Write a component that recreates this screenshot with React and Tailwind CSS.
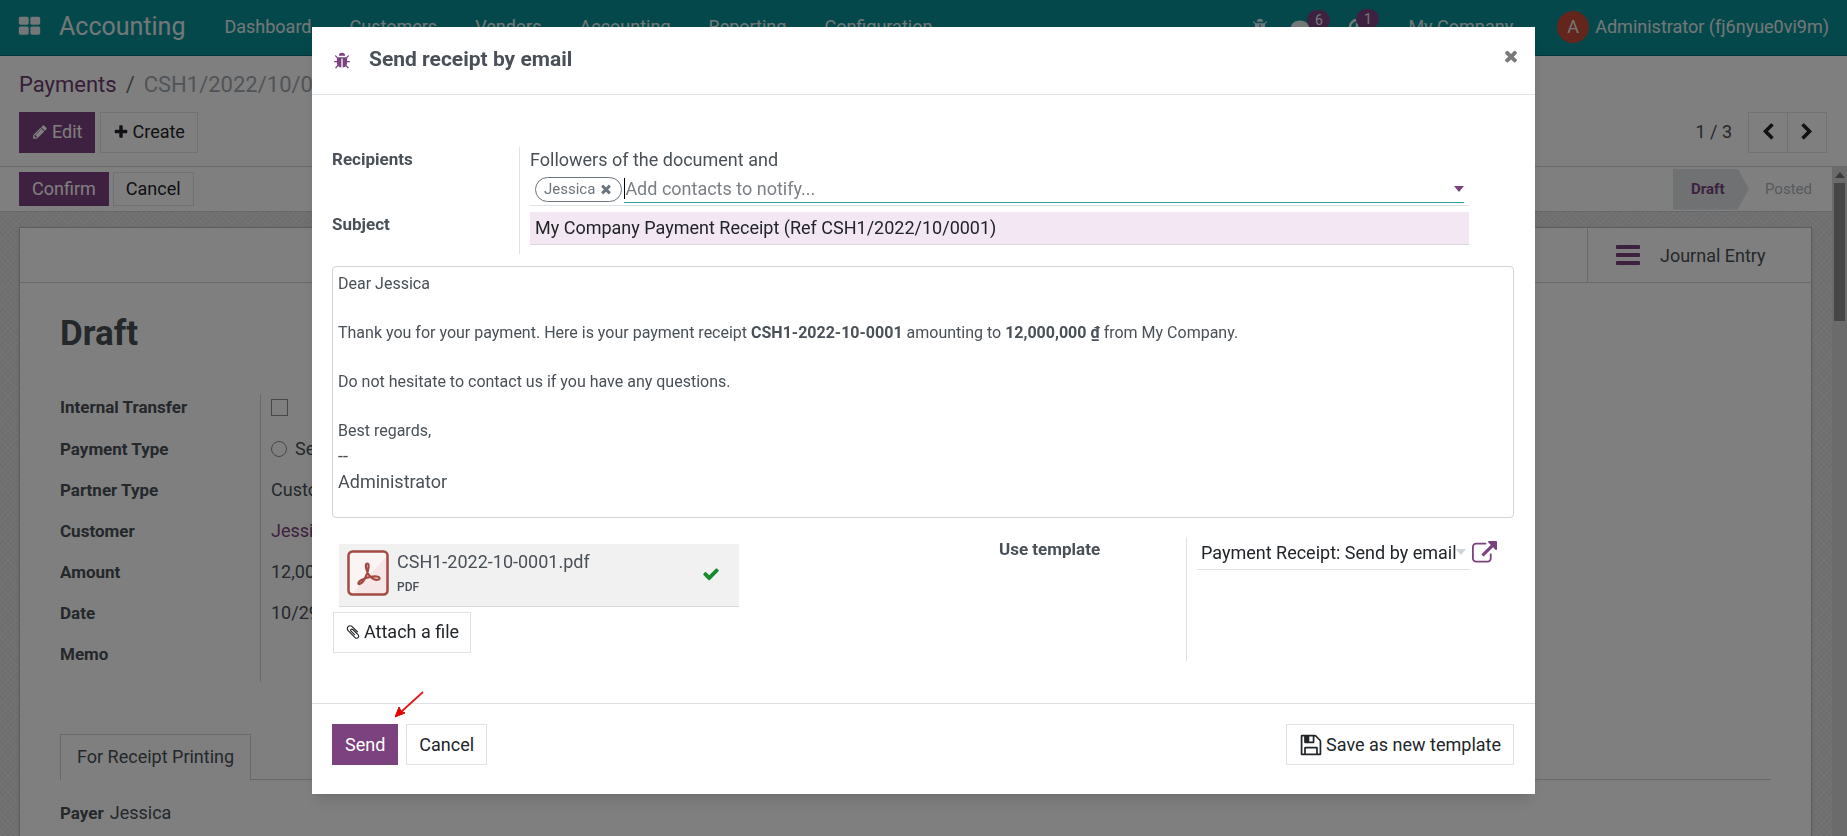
import React, { useState } from 'react';

/* ── Icons ───────────────────────────────────────────────────────────── */
const ICONS = {
  apps: 'M832 1024v384q0 52-38 90t-90 38h-512q-52 0-90-38t-38-90v-384q0-52 38-90t90-38h512q52 0 90 38t38 90zm0-768v384q0 52-38 90t-90 38h-512q-52 0-90-38t-38-90v-384q0-52 38-90t90-38h512q52 0 90 38t38 90zm896 768v384q0 52-38 90t-90 38h-512q-52 0-90-38t-38-90v-384q0-52 38-90t90-38h512q52 0 90 38t38 90zm0-768v384q0 52-38 90t-90 38h-512q-52 0-90-38t-38-90v-384q0-52 38-90t90-38h512q52 0 90 38t38 90z',
  times: 'M1490 1322q0 40-28 68l-136 136q-28 28-68 28t-68-28l-294-294-294 294q-28 28-68 28t-68-28l-136-136q-28-28-28-68t28-68l294-294-294-294q-28-28-28-68t28-68l136-136q28-28 68-28t68 28l294 294 294-294q28-28 68-28t68 28l136 136q28 28 28 68t-28 68l-294 294 294 294q28 28 28 68z',
  check: 'M1671 566q0 40-28 68l-724 724-136 136q-28 28-68 28t-68-28l-136-136-362-362q-28-28-28-68t28-68l136-136q28-28 68-28t68 28l294 295 656-657q28-28 68-28t68 28l136 136q28 28 28 68z',
  plus: 'M1600 736v192q0 40-28 68t-68 28h-416v416q0 40-28 68t-68 28h-192q-40 0-68-28t-28-68v-416h-416q-40 0-68-28t-28-68v-192q0-40 28-68t68-28h416v-416q0-40 28-68t68-28h192q40 0 68 28t28 68v416h416q40 0 68 28t28 68z',
  pencil: 'M491 1536l91-91-235-235-91 91v107h128v128h107zm523-928q0-22-22-22-10 0-17 7l-542 542q-7 7-7 17 0 22 22 22 10 0 17-7l542-542q7-7 7-17zm-54-192l416 416-832 832h-416v-416zm683 96q0 53-37 90l-166 166-416-416 166-165q36-38 90-38 53 0 91 38l235 234q37 39 37 91z',
  left: 'M1427 301l-531 531 531 531q19 19 19 45t-19 45l-166 166q-19 19-45 19t-45-19l-742-742q-19-19-19-45t19-45l742-742q19-19 45-19t45 19l166 166q19 19 19 45t-19 45z',
  right: 'M1363 877l-742 742q-19 19-45 19t-45-19l-166-166q-19-19-19-45t19-45l531-531-531-531q-19-19-19-45t19-45l166-166q19-19 45-19t45 19l742 742q19 19 19 45t-19 45z',
  bug: 'M1696 960q0 26-19 45t-45 19h-224q0 171-67 290l208 209q19 19 19 45t-19 45q-18 19-45 19t-45-19l-198-197q-5 5-15 13t-42 28.5-65 36.5-82 29-97 13v-896h-128v896q-51 0-101.5-13.5t-87-33-66-39-43.5-32.5l-15-14-183 207q-20 21-48 21-24 0-43-16-19-18-20.5-44.5t15.5-46.5l202-227q-58-114-58-274h-224q-26 0-45-19t-19-45 19-45 45-19h224v-294l-173-173q-19-19-19-45t19-45 45-19 45 19l173 173h844l173-173q19-19 45-19t45 19 19 45-19 45l-173 173v294h224q26 0 45 19t19 45zm-480-576h-640q0-133 93.5-226.5t226.5-93.5 226.5 93.5 93.5 226.5z',
  bars: 'M1664 1344v128q0 26-19 45t-45 19h-1408q-26 0-45-19t-19-45v-128q0-26 19-45t45-19h1408q26 0 45 19t19 45zm0-512v128q0 26-19 45t-45 19h-1408q-26 0-45-19t-19-45v-128q0-26 19-45t45-19h1408q26 0 45 19t19 45zm0-512v128q0 26-19 45t-45 19h-1408q-26 0-45-19t-19-45v-128q0-26 19-45t45-19h1408q26 0 45 19t19 45z',
  external: 'M1408 928v320q0 119-84.5 203.5t-203.5 84.5h-832q-119 0-203.5-84.5t-84.5-203.5v-832q0-119 84.5-203.5t203.5-84.5h704q14 0 23 9t9 23v64q0 14-9 23t-23 9h-704q-66 0-113 47t-47 113v832q0 66 47 113t113 47h832q66 0 113-47t47-113v-320q0-14 9-23t23-9h64q14 0 23 9t9 23zm384-864v512q0 26-19 45t-45 19-45-19l-176-176-652 652q-10 10-23 10t-23-10l-114-114q-10-10-10-23t10-23l652-652-176-176q-19-19-19-45t19-45 45-19h512q26 0 45 19t19 45z',
  floppy: 'M512 1536h768v-384h-768v384zm896 0h128v-896q0-14-10-38.5t-20-34.5l-281-281q-10-10-34-20t-39-10v416q0 40-28 68t-68 28h-576q-40 0-68-28t-28-68v-416h-128v1280h128v-416q0-40 28-68t68-28h832q40 0 68 28t28 68v416zm-384-928v-320q0-13-9.5-22.5t-22.5-9.5h-192q-13 0-22.5 9.5t-9.5 22.5v320q0 13 9.5 22.5t22.5 9.5h192q13 0 22.5-9.5t9.5-22.5zm640 32v928q0 40-28 68t-68 28h-1344q-40 0-68-28t-28-68v-1344q0-40 28-68t68-28h928q40 0 88 20t76 48l280 280q28 28 48 76t20 88z',
  clip: 'M1596 1385q0 117-79 196t-196 79q-135 0-235-100l-777-776q-113-115-113-271 0-159 110-270t269-111q158 0 273 113l605 606q10 10 10 22 0 16-30.5 46.5t-46.5 30.5q-13 0-23-10l-606-607q-79-77-181-77-106 0-179 75t-73 181q0 105 76 181l776 777q63 63 145 63 64 0 106-42t42-106q0-82-63-145l-581-581q-26-24-60-24-29 0-48 19t-19 48q0 32 25 59l410 410q10 10 10 22 0 16-31 47t-47 31q-12 0-22-10l-410-410q-63-61-63-149 0-82 57-139t139-57q88 0 149 63l581 581q100 98 100 235z',
  comment: 'M1792 896q0 174-120 321.5t-326 233-450 85.5q-70 0-145-8-198 175-460 242-49 14-114 22-17 2-30.5-9t-17.5-29v-1q-3-4-.5-12t2-10 4.5-9.5l6-9 7-8.5 8-9q7-8 31-34.5t34.5-38 31-39.5 32.5-51 27-59 26-76q-157-89-247.5-220t-90.5-281q0-130 71-248.5t191-204.5 286-136.5 348-50.5q244 0 450 85.5t326 233 120 321.5z',
};

const Icon = ({ name, className = 'size-[18px]' }) => (
  <svg viewBox="0 0 1792 1792" fill="currentColor" aria-hidden="true" className={`shrink-0 ${className}`}>
    <path d={ICONS[name]} />
  </svg>
);

const Caret = ({ className }) => (
  <svg viewBox="0 0 10 6" fill="currentColor" aria-hidden="true" className={`w-[10px] h-[6px] shrink-0 ${className}`}>
    <path d="M0 0h10L5 6z" />
  </svg>
);

const PdfIcon = () => (
  <svg viewBox="0 0 42 46" className="w-[42px] h-[46px] shrink-0" aria-hidden="true">
    <rect x="1.5" y="1.5" width="39" height="43" rx="4" fill="#fbf4f4" />
    <path d="M40 6v35a3 3 0 0 1-3 3H5z" fill="#f7e6e7" />
    <rect x="1.5" y="1.5" width="39" height="43" rx="4" fill="none" stroke="#a34a42" strokeWidth="2.500" />
    <path
      d="M20.500 13.500c-2.200 0-2 3.500-.5 7.500 1.200 3.500 3.500 6.500 6.500 8 3 1.300 6 .9 6-.8 0-2-4.500-2.200-9.500-1.200-4.500.9-8.500 2.600-10.500 4.300-1.700 1.500-1.300 3 .2 2.700 2.300-.5 5-4.500 7-9.500 1.800-4.500 2.800-11 .8-11z"
      fill="none" stroke="#a34a42" strokeWidth="2.200" strokeLinejoin="round" />
  </svg>
);

/* ── Buttons ─────────────────────────────────────────────────────────── */
const PrimaryBtn = ({ children, className = 'h-[41px]' }) => (
  <button type="button" className={`flex items-center gap-1 bg-[#7c4280] text-white px-[13px] ${className}`}>{children}</button>
);

const PlainBtn = ({ children, className = 'h-[41px] px-3' }) => (
  <button type="button" className={`flex items-center gap-[3px] bg-white text-[#212529] border border-[#dee2e6] ${className}`}>{children}</button>
);

/* ── Page behind the dialog ──────────────────────────────────────────── */
const MENUS = ['Dashboard', 'Customers', 'Vendors', 'Accounting', 'Reporting', 'Configuration'];

const Navbar = () => (
  <header className="h-14 shrink-0 flex items-center bg-[#0a9199] border-b border-[#066a70] text-[#e6eeee] pl-[18px] pr-[18px] pb-0.5">
    <button type="button" aria-label="Apps"><Icon name="apps" className="size-[23px]" /></button>
    <a href="#home" className="ml-[18px] text-[25px]">Accounting</a>
    <nav className="ml-[39px] flex gap-[38px] grow">
      {MENUS.map((m) => <a key={m} href={`#${m.toLowerCase()}`}>{m}</a>)}
    </nav>
    <button type="button" aria-label="Debug"><Icon name="bug" /></button>
    <button type="button" aria-label="Messages" className="relative mx-[22px]">
      <Icon name="comment" />
      <span className="absolute left-4 -top-2 h-5 w-[23px] rounded-full bg-[#7c4280] text-[14px] leading-5">6</span>
    </button>
    <button type="button" aria-label="Activities" className="relative ml-[17px] mr-[42px]">
      <svg viewBox="0 0 18 18" className="size-[18px]" fill="none" stroke="currentColor" strokeWidth="2.500" aria-hidden="true">
        <circle cx="9" cy="9" r="7" />
        <path d="M9 5v5H6" />
      </svg>
      <span className="absolute left-2 -top-[9px] h-5 w-[23px] rounded-full bg-[#7c4280] text-[14px] leading-5">1</span>
    </button>
    <a href="#company">My Company</a>
    <a href="#user" className="ml-11 flex items-center gap-[6px]">
      <span className="size-8 rounded-full bg-[#c84b38] flex items-center justify-center">A</span>
      Administrator (fj6nyue0vi9m)
    </a>
  </header>
);

const ControlPanel = () => (
  <div className="shrink-0 h-[111px] border-b border-[#ced4da] bg-white pl-[19px] pr-5 pt-[15px] flex flex-col justify-between pb-[13px]">
    <div className="text-[22px] leading-[28px] text-[#6c757d] flex gap-[9px]">
      <a href="#payments" className="text-[#6d3a70]">Payments</a>
      <span>/</span>
      <span className="text-[#a3a9af]">CSH1/2022/10/0001</span>
    </div>
    <div className="flex items-center">
      <PrimaryBtn className="h-[41px] pb-0.5"><Icon name="pencil" className="size-4" /> Edit</PrimaryBtn>
      <span className="w-[5px]" />
      <PlainBtn className="h-[41px] px-3 pb-0.5"><Icon name="plus" className="size-4" /> Create</PlainBtn>
      <span className="ml-auto mr-4 pb-0.5">1 / 3</span>
      <PlainBtn className="h-[41px] w-10 justify-center pb-0.5"><Icon name="left" /></PlainBtn>
      <PlainBtn className="h-[41px] w-10 justify-center pb-0.5 -ml-px"><Icon name="right" /></PlainBtn>
    </div>
  </div>
);

const FIELDS = [
  { label: 'Internal Transfer', type: 'check' },
  { label: 'Payment Type', type: 'radio', value: 'Send' },
  { label: 'Partner Type', value: 'Customer' },
  { label: 'Customer', value: 'Jessica', link: true },
  { label: 'Amount', value: '12,000,000 ₫' },
  { label: 'Date', value: '10/29/2022' },
  { label: 'Memo', value: '' },
];

const FieldValue = ({ field }) => {
  if (field.type === 'check')
    return <input type="checkbox" aria-label={field.label} className="appearance-none block mt-1 size-[17px] border border-[#8b9197]" />;
  if (field.type === 'radio')
    return (
      <label className="flex items-center gap-2">
        <input type="radio" name="ptype" className="appearance-none size-4 rounded-full border border-[#8b9197]" />
        {field.value}
      </label>
    );
  if (field.link) return <a href="#customer" className="text-[#7c4280]">{field.value}</a>;
  return field.value;
};

const PaymentForm = () => (
  <div className="grow min-h-0 flex">
    <div className="grow flex flex-col min-h-0">
      <div className="h-[45px] shrink-0 bg-white border-b border-[#ced4da] flex items-center pl-[19px]">
        <PrimaryBtn className="h-[34px] pb-0.5">Confirm</PrimaryBtn>
        <span className="w-1" />
        <PlainBtn className="h-[34px] px-3 pb-0.5">Cancel</PlainBtn>
        <div className="ml-auto mr-5 flex items-center text-[15px]">
          <div className="h-[41px] w-[76px] pl-[18px] flex items-center font-bold text-[#7c4280] bg-[#dee2e6] [clip-path:polygon(0_0,85%_0,100%_50%,85%_100%,0_100%)]">Draft</div>
          <span className="ml-4 text-[#adb5bd]">Posted</span>
        </div>
      </div>
      <div className="grow min-h-0 overflow-hidden pt-[15px] pl-[19px] pr-5 bg-[#dcdcdc] bg-[repeating-linear-gradient(45deg,#e6e6e6_0_1px,transparent_1px_4px),repeating-linear-gradient(-45deg,#e6e6e6_0_1px,transparent_1px_4px)]">
        <div className="bg-white border border-[#b9bdc1] h-[800px] shadow">
          <div className="h-[55px] border-b border-[#ced4da] flex justify-end">
            <button type="button" className="w-[224px] border-l border-[#ced4da] flex items-center pl-[26px] gap-[18px]">
              <Icon name="bars" className="size-7 text-[#7c4280]" /> Journal Entry
            </button>
          </div>
          <div className="px-10">
            <h1 className="mt-[27px] text-[35px] leading-[48px] font-bold">Draft</h1>
            <dl className="mt-9">
              {FIELDS.map((f) => (
                <div key={f.label} className={`flex ${f.type === 'check' ? 'h-[42px]' : 'h-[41px]'}`}>
                  <dt className="w-[201px] pt-px text-[17px] font-bold border-r border-[#ced4da] leading-6">{f.label}</dt>
                  <dd className="pl-[10px] leading-6 pt-px">
                    <FieldValue field={f} />
                  </dd>
                </div>
              ))}
            </dl>
            <div className="mt-[52px] flex border-b border-[#ced4da]">
              <button type="button" className="-mb-px h-[46px] px-4 pb-0.5 bg-white border border-b-0 border-[#ced4da]">For Receipt Printing</button>
            </div>
            <p className="mt-[19px] flex items-baseline gap-[6px]"><b className="text-[17px]">Payer</b> Jessica</p>
          </div>
        </div>
      </div>
    </div>
    {/* scrollbar */}
    <div className="w-[15px] shrink-0 bg-[#d6d6d6] flex flex-col items-center">
      <Caret className="my-[5px] rotate-180 text-[#777]" />
      <div className="w-[11px] h-[138px] bg-[#8c8c8c]" />
    </div>
  </div>
);

/* ── Dialog ──────────────────────────────────────────────────────────── */
const MailBody = () => (
  <div contentEditable suppressContentEditableWarning role="textbox" aria-label="Body"
    className="mt-3 h-[252px] rounded-sm border border-[#ced4da] px-[5px] pt-[5px] text-[16px] leading-6 outline-none">
    <p className="mb-[25px]">Dear Jessica</p>
    <p className="mb-[25px]">
      Thank you for your payment. Here is your payment receipt <b>CSH1-2022-10-0001</b> amounting to <b>12,000,000 ₫</b> from My Company.
    </p>
    <p className="mb-[25px]">Do not hesitate to contact us if you have any questions.</p>
    <p>Best regards,</p>
    <p className="text-[18px] leading-[26px]">--<br />Administrator</p>
  </div>
);

const SendDialog = () => {
  const [subject, setSubject] = useState('My Company Payment Receipt (Ref CSH1/2022/10/0001)');

  return (
    <div role="dialog" aria-labelledby="dlg-title" className="relative w-full max-w-[1223px] bg-white shadow-lg">
      <div className="h-[68px] border-b border-[#dee2e6] flex items-center pl-[21px] pr-[15px]">
        <Icon name="bug" className="size-[18px] text-[#7c4280]" />
        <h2 id="dlg-title" className="ml-[18px] pb-0.5 text-[21px] font-bold">Send receipt by email</h2>
        <button type="button" aria-label="Close" className="ml-auto mb-[10px] text-[#7a7a7a]"><Icon name="times" /></button>
      </div>

      <div className="pl-5 pr-[21px] pt-[52px]">
        <div className="flex h-[107px]">
          <div className="w-[188px] border-r border-[#dee2e6] text-[17px] font-bold leading-[25px]">
            <label htmlFor="recipients" className="block mb-10">Recipients</label>
            <label htmlFor="subject" className="block">Subject</label>
          </div>
          <div className="grow pl-[10px] mr-[45px]">
            <p className="leading-[26px]">Followers of the document and</p>
            <div className="h-[33px] flex items-center border-b border-[#dee2e6] px-[5px]">
              <span className="h-[25px] flex items-center gap-1 rounded-full border border-[#6c757d] px-2 text-[15px] text-[#6c757d]">
                Jessica
                <button type="button" aria-label="Remove Jessica"><Icon name="times" className="size-[14px]" /></button>
              </span>
              <div className="ml-0.5 h-[28px] grow flex items-center border-b border-[#2d9a9e]">
                <span className="w-px h-[21px] bg-black" />
                <input id="recipients" placeholder="Add contacts to notify..." className="grow outline-none placeholder-[#7b8085]" />
                <Caret className="text-[#7c4280]" />
              </div>
            </div>
            <input id="subject" value={subject} onChange={(e) => setSubject(e.target.value)}
              className="mt-[6px] block w-full h-[33px] px-[5px] pb-0.5 bg-[#f2e7f3] border-b border-[#dcd5dd] text-[#212529] outline-none" />
          </div>
        </div>

        <MailBody />

        <div className="mt-[19px] flex">
          <div className="grow pt-[7px] pl-px">
            <div className="ml-[6px] w-[400px] h-[63px] bg-[#f1f1f1] border-b border-[#d8d8d8] flex px-2 pt-[6px]">
              <PdfIcon />
              <div className="ml-2">
                <div className="leading-6">CSH1-2022-10-0001.pdf</div>
                <div className="text-[12px] leading-[26px] font-medium">PDF</div>
              </div>
              <Icon name="check" className="ml-auto mr-[11px] mt-[15px] size-[18px] text-[#158a2e]" />
            </div>
            <PlainBtn className="mt-[5px] h-[41px] px-[11px] pb-0.5"><Icon name="clip" className="size-4" /> Attach a file</PlainBtn>
          </div>
          <div className="w-[515px] h-[124px] flex">
            <label htmlFor="template" className="w-[188px] shrink-0 text-[17px] font-bold leading-6 border-r border-[#dee2e6]">Use template</label>
            <div className="ml-[10px] h-[33px] w-[273px] flex items-center border-b border-[#dee2e6] px-1 pb-0.5">
              <select id="template" className="appearance-none grow min-w-0 bg-transparent text-[#212529] outline-none">
                <option>Payment Receipt: Send by email</option>
              </select>
              <Caret className="text-[#ced4da]" />
            </div>
            <button type="button" aria-label="Open template" className="ml-0.5 h-[33px] text-[#7c4280]"><Icon name="external" className="size-[25px]" /></button>
          </div>
        </div>
      </div>

      <div className="mt-[42px] h-[91px] border-t border-[#dee2e6] pl-5 pr-[21px] pt-5 flex items-start">
        <PrimaryBtn>Send</PrimaryBtn>
        <span className="w-2" />
        <PlainBtn>Cancel</PlainBtn>
        <PlainBtn className="ml-auto h-[41px] px-3"><Icon name="floppy" className="size-[24px]" /> Save as new template</PlainBtn>
      </div>

      {/* pointer at the Send button */}
      <svg viewBox="0 0 30 28" className="absolute left-[83px] bottom-[76px] w-[30px] h-7" aria-hidden="true">
        <path d="M28 2L6 22" stroke="#e01b1b" strokeWidth="1.800" />
        <path d="M0 27l4-10 2 4 4 2z" fill="#e60000" stroke="#e60000" />
      </svg>
    </div>
  );
};

export default function App() {
  return (
    <div className="h-screen overflow-hidden flex flex-col bg-white text-[#495057] text-[18px]" style={{ fontFamily: 'Roboto, "Liberation Sans", sans-serif' }}>
      <Navbar />
      <ControlPanel />
      <PaymentForm />
      <div className="fixed inset-0 bg-black/50 flex justify-center items-start pt-[27px]">
        <SendDialog />
      </div>
    </div>
  );
}
